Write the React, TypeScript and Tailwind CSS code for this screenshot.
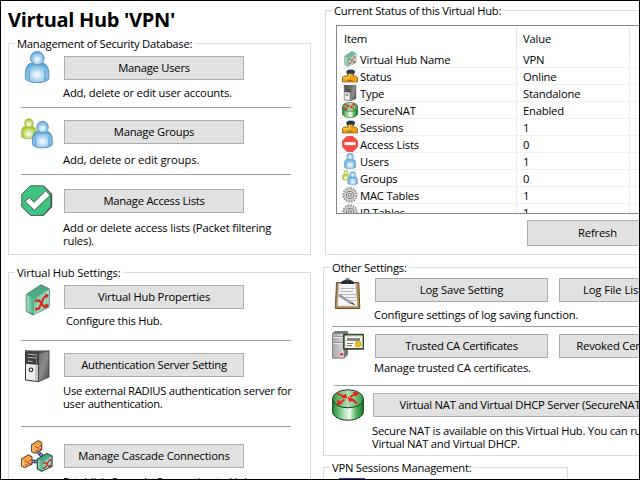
import type { ReactNode } from "react";

type IconProps = { size?: number };

function Person({ body, edge, id }: { body: string; edge: string; id: string }) {
  return (
    <>
      <defs>
        <radialGradient id={id + "h"} cx="0.5" cy="0.6" r="0.6">
          <stop offset="0" stopColor="#fff" />
          <stop offset="1" stopColor={body} />
        </radialGradient>
        <radialGradient id={id + "b"} cx="0.5" cy="0.6" r="0.6">
          <stop offset="0" stopColor="#fff" />
          <stop offset="1" stopColor={body} />
        </radialGradient>
      </defs>
      <path
        d="M9 12.5C6 14 4.4 17.5 4.4 22v5.4c0 1 .8 1.8 2 2.2 2 1.2 5 2 9.6 2s7.600-.6 9.600-2c1.400-.4 2.200-1.200 2.200-2.200V22c0-4.500-1.800-8-4.800-9.500z"
        fill={`url(#${id}b)`}
        stroke={edge}
        strokeWidth="0.9"
      />
      <circle cx="16.300" cy="7.200" r="6.800" fill={`url(#${id}h)`} stroke={edge} strokeWidth="0.9" />
      <path d="M8.600 19.500c-1 3 0 6-.4 10M23.600 19.500c1 3 0 6 .4 10" stroke={edge} strokeWidth="0.9" fill="none" />
    </>
  );
}

function UserIcon({ size = 32 }: IconProps) {
  return (
    <svg width={size} height={size} viewBox="0 0 32 32">
      <Person id={"u" + size} body="#5aa8de" edge="#4f8cbf" />
    </svg>
  );
}

function GroupIcon({ size = 32 }: IconProps) {
  return (
    <svg width={size} height={size} viewBox="0 0 32 32">
      <g transform="translate(-2.500 .6) scale(.64)">
        <Person id={"g" + size} body="#a3c614" edge="#8fa53a" />
      </g>
      <g transform="translate(7.700 3) scale(.85)">
        <Person id={"h" + size} body="#5aa8de" edge="#4584b8" />
      </g>
    </svg>
  );
}

function CheckIcon() {
  return (
    <svg width="32" height="32" viewBox="0 0 32 32">
      <path d="M9.500 .8h13.500l8.200 8.200v13l-8.700 8.900H10L.8 22V9z" fill="#3a4a45" />
      <path d="M9.500 .8h12.500l7.800 8.200v12.500l-8 8.900H10L.8 22V9z" fill="#3fc380" stroke="#55685f" strokeWidth="1" />
      <path d="M3.800 16.200l4.800-3.600 4.600 4.600L24.800 5.600l4.200 4.900-15.600 15z" fill="#fff" stroke="#3e5f4f" strokeWidth="1" />
      <path d="M7.500 19.500l6 4.200L27.500 10.500l-14 14z" fill="#cfd4d2" />
    </svg>
  );
}

function HubShape({ id, orange = false }: { id: string; orange?: boolean }) {
  const light = orange ? "#fbd08a" : "#a5dcc2";
  const mid = orange ? "#f3a337" : "#4cab84";
  const dark = orange ? "#b9741d" : "#2f7f60";
  return (
    <>
      <defs>
        <linearGradient id={id} x1="0" y1="0" x2="1" y2="1">
          <stop offset="0" stopColor={mid} />
          <stop offset="0.55" stopColor={light} />
          <stop offset="1" stopColor={mid} />
        </linearGradient>
        <linearGradient id={id + "s"} x1="0" y1="0" x2="1" y2="0">
          <stop offset="0" stopColor={light} />
          <stop offset="1" stopColor={mid} />
        </linearGradient>
      </defs>
      <path d="M5.200 10.500L20 .800l8.300 4.200-.3 18-16 8L5.200 27z" fill={dark} stroke="#52786a" strokeWidth="1" />
      <path d="M5.500 10.500L20 1.200l8 4-15 9.300z" fill={mid} />
      <path d="M5.500 10.500l7.500 4v16L5.500 27z" fill={`url(#${id}s)`} />
      <path d="M13 14.500l15-9.300v17.600l-15 7.700z" fill={`url(#${id})`} />
      <path d="M15 25.500l3-1 5-11 3.500-1.500M15.200 16.800l3-.3 5 6.500 3.500-1" fill="none" stroke="#d9201c" strokeWidth="1.900" />
      <path d="M23.500 10.300l4.300.3-2.700 3.900zM23.800 19.800l4 1-3.200 3.500zM14.300 23.300l3 1.200-2.800 3zM14.300 14.900l2.800 1.200-2.800 2.600z" fill="#d9201c" />
    </>
  );
}

function HubIcon({ size = 32 }: IconProps) {
  return (
    <svg width={size} height={size} viewBox="0 0 32 32" className={size === 16 ? "opacity-80" : ""}>
      <HubShape id={"hub" + size} />
    </svg>
  );
}

function ServerIcon({ size = 32 }: IconProps) {
  const id = "srv" + size;
  return (
    <svg width={size} height={size} viewBox="0 0 32 32">
      <defs>
        <linearGradient id={id} x1="0" y1="0" x2="1" y2="1">
          <stop offset="0" stopColor="#6a6a6a" />
          <stop offset="0.5" stopColor="#8c8c8c" />
          <stop offset="1" stopColor="#4a4a4a" />
        </linearGradient>
      </defs>
      <path d="M4.500 .500H27L17.500 3.500h-13z" fill="#555" />
      <path d="M17 3.500L28 .500V27l-11 4.800z" fill={`url(#${id})`} stroke="#333" strokeWidth="0.800" />
      <path d="M4.500 .800l12.800 2V31.600L4.500 30z" fill="#ededed" stroke="#333" strokeWidth="1" />
      <path d="M5 1.200l12 1.900V15L5 13.800z" fill="#3c3c3c" />
      <path d="M6.500 4l9 1M6.500 7.300l9 .8M6.500 11l5 .4" stroke="#bdbdbd" strokeWidth="1" />
      <path d="M15.400 3v12M15 16l0 15" stroke="#8d8d8d" strokeWidth="0.800" />
      <circle cx="10" cy="19.800" r="1.800" fill="#fff" stroke="#222" strokeWidth="1.100" />
    </svg>
  );
}

function CascadeIcon() {
  return (
    <svg width="32" height="32" viewBox="0 0 32 32">
      <path d="M15 10l8 8M8 21.500h10" stroke="#3c3c70" strokeWidth="3.600" />
      <path d="M15 10l8 8M8 21.500h10" stroke="#b9b9dc" strokeWidth="1.200" strokeDasharray="2 1" />
      <g transform="translate(8.300 .3) scale(.44 .42)">
        <HubShape id="ca" orange />
        <path d="M5.200 10.500L20 .800l8.300 4.200-.3 18-16 8L5.200 27z" fill="none" stroke="#4c330d" strokeWidth="2" />
      </g>
      <g transform="translate(-2 14.600) scale(.46 .42)">
        <HubShape id="cb" orange />
        <path d="M5.200 10.500L20 .800l8.300 4.200-.3 18-16 8L5.200 27z" fill="none" stroke="#4c330d" strokeWidth="2" />
      </g>
      <g transform="translate(13 13) scale(.64 .59)">
        <HubShape id="cc" />
        <path d="M5.200 10.500L20 .800l8.300 4.200-.3 18-16 8L5.200 27z" fill="none" stroke="#1d4b3a" strokeWidth="1.600" />
      </g>
    </svg>
  );
}

function ClipboardIcon() {
  return (
    <svg width="32" height="32" viewBox="0 0 32 32">
      <path d="M4.500 5.500h22.300l1 26H3.300z" fill="#b58b50" stroke="#6e4e24" strokeWidth="1" />
      <path d="M6.500 6.500h17.500l1.500 22.800H5.500z" fill="#f4f4f4" stroke="#9d9d9d" strokeWidth="0.600" />
      <path d="M9 7c0-3 2-3.500 4.300-4C13.500.500 17.500.500 17.700 3c3 .5 4.300 1.500 4.300 4z" fill="#262a33" />
      <circle cx="15.500" cy="2.500" r="0.900" fill="#b7bac0" />
      <path d="M8.500 11.500h15M8 14.500h13M8 17.500h16M13 20.500h11M17 23.500h7" stroke="#b5b5b5" strokeWidth="1" />
      <path d="M7 18l13 8.700" stroke="#777d83" strokeWidth="2.200" />
      <path d="M6.500 17.300l13 8.600" stroke="#d5d8da" strokeWidth="0.600" />
      <path d="M19.500 25.800l3 2" stroke="#333" strokeWidth="1.200" />
    </svg>
  );
}

function CertificateIcon() {
  return (
    <svg width="32" height="32" viewBox="0 0 32 32">
      <defs>
        <linearGradient id="cert" x1="0" y1="0" x2="1" y2="0">
          <stop offset="0" stopColor="#a9a9a9" />
          <stop offset="1" stopColor="#dadada" />
        </linearGradient>
      </defs>
      <path d="M.500 2.500L3 .500h12.500L15.500 23.500l-3 3.500H.500z" fill="#777" stroke="#666" strokeWidth="0.800" />
      <path d="M.500 2.500h11.700V27H.500z" fill="url(#cert)" stroke="#808080" strokeWidth="0.700" />
      <path d="M1 5.500h11M1 11.500h11" stroke="#9a9a9a" />
      <path d="M1 6.500h11M1 12.500h11" stroke="#e6e6e6" />
      <circle cx="9.500" cy="23.300" r="1.300" fill="#f41818" />
      <path d="M11.800 3.600h19.700v14.200H11.800z" fill="#fdfdf5" stroke="#354b28" strokeWidth="1.800" />
      <path d="M13.800 5.600h15.700v10.200H13.800z" fill="none" stroke="#c8d4b8" strokeWidth="0.700" />
      <path d="M15 7h13v3H15z" fill="#858585" />
      <path d="M15 12.500h6M15 14.500h5" stroke="#777" />
      <circle cx="26" cy="13" r="3" fill="#e6c21f" stroke="#bb930e" strokeWidth="0.600" />
    </svg>
  );
}

function RouterIcon({ size = 32 }: IconProps) {
  const id = "rt" + size;
  return (
    <svg width={size} height={size} viewBox="0 0 32 32">
      <defs>
        <linearGradient id={id}>
          <stop offset="0" stopColor="#168c28" />
          <stop offset="0.350" stopColor="#a9dfae" />
          <stop offset="0.550" stopColor="#f2fff2" />
          <stop offset="0.750" stopColor="#5cba65" />
          <stop offset="1" stopColor="#0f7a20" />
        </linearGradient>
        <linearGradient id={id + "t"}>
          <stop offset="0" stopColor="#2fa03c" />
          <stop offset="0.500" stopColor="#b5dfb8" />
          <stop offset="1" stopColor="#2fa03c" />
        </linearGradient>
      </defs>
      <path d="M.600 10v12.500C.600 27.500 7.500 31.200 16 31.200s15.400-3.700 15.400-8.700V10z" fill={`url(#${id})`} stroke="#26352a" strokeWidth="1" />
      <ellipse cx="16" cy="9.800" rx="15.400" ry="9" fill={`url(#${id}t)`} stroke="#26352a" strokeWidth="1" />
      <path d="M5 4.300l7.500 3.500M12.500 10.500l-6 4.500M19 9.500l6 5M18 8l6-3.500" stroke="#ee1c1c" strokeWidth="1.800" />
      <path d="M15.500 9.300l-6-.3 4-4.500zM4.500 16l1.500-5.500 4.500 4.200zM15.800 7.500l1.200 5.500 5-1.800zM27 3.300l-6.500-.3 4 4.500z" fill="#ee1c1c" />
    </svg>
  );
}

function PlugIcon() {
  return (
    <svg width="16" height="16" viewBox="0 0 16 16">
      <path d="M4.500 3.500L6.500 2h4.500l2 1.500-1.500 3H5.500z" fill="#243a5c" stroke="#15233c" strokeWidth="0.600" />
      <path d="M6 5.500h5v2.500h2.500l2 1.500v4.500H.5V9.500L2 8h4z" fill="#eda312" stroke="#7c4e05" strokeWidth="0.700" />
      <path d="M7.500 6v3L5.500 10h-4" stroke="#ffdb70" strokeWidth="1" fill="none" />
      <path d="M5.500 12.500h5" stroke="#9a6408" strokeWidth="1" />
    </svg>
  );
}

function StopIcon() {
  return (
    <svg width="16" height="16" viewBox="0 0 16 16">
      <path d="M5 .400h6L15.600 5v5.700L11 15.400H5L.400 10.700V5z" fill="#fa4a42" stroke="#d93831" strokeWidth="0.800" />
      <path d="M2.500 6.200h11v2.900h-11z" fill="#fff" />
    </svg>
  );
}

function GearIcon() {
  return (
    <svg width="16" height="16" viewBox="0 0 16 16">
      <circle cx="8" cy="8" r="6.900" fill="none" stroke="#8b8b8b" strokeWidth="1.600" strokeDasharray="1.600 1.110" />
      <circle cx="8" cy="8" r="6" fill="#d2d2d2" stroke="#a0a0a0" strokeWidth="0.600" />
      <circle cx="8" cy="8" r="3.700" fill="#e3e3e3" stroke="#777" strokeWidth="1" />
      <circle cx="8" cy="8" r="1.700" fill="#c3c3c3" stroke="#777" strokeWidth="0.800" />
    </svg>
  );
}

function Button({ className, children }: { className: string; children: ReactNode }) {
  return (
    <button className={`flex shrink-0 items-center justify-center border border-[#adadad] bg-[#e1e1e1] pb-px ${className}`}>
      {children}
    </button>
  );
}

function Legend({ children, className = "" }: { children: ReactNode; className?: string }) {
  return <div className={`-mt-[7px] ml-[6px] h-[14px] w-fit bg-white px-[2px] leading-[14px] ${className}`}>{children}</div>;
}

function Row({ className, icon, iconClass, children }: { className: string; icon: ReactNode; iconClass: string; children: ReactNode }) {
  return (
    <div className={`flex shrink-0 ${className}`}>
      <div className={`h-8 w-8 shrink-0 ${iconClass}`}>{icon}</div>
      <div className="shrink-0">{children}</div>
    </div>
  );
}

const items: { icon: ReactNode; name: string; value: string }[] = [
  { icon: <HubIcon size={16} />, name: "Virtual Hub Name", value: "VPN" },
  { icon: <PlugIcon />, name: "Status", value: "Online" },
  { icon: <ServerIcon size={16} />, name: "Type", value: "Standalone" },
  { icon: <RouterIcon size={16} />, name: "SecureNAT", value: "Enabled" },
  { icon: <PlugIcon />, name: "Sessions", value: "1" },
  { icon: <StopIcon />, name: "Access Lists", value: "0" },
  { icon: <UserIcon size={16} />, name: "Users", value: "1" },
  { icon: <GroupIcon size={16} />, name: "Groups", value: "0" },
  { icon: <GearIcon />, name: "MAC Tables", value: "1" },
  { icon: <GearIcon />, name: "IP Tables", value: "1" },
];

function StatusList() {
  return (
    <div className="ml-[10px] mt-[7px] h-[189px] w-[330px] overflow-hidden border border-[#828790] pl-px">
      <div className="flex h-[25px] pt-px">
        <div className="w-[179px] border-r border-[#e5e5e5] pl-[6px] pt-1 leading-4">Item</div>
        <div className="w-[113px] border-r border-[#e5e5e5] pl-[6px] pt-1 leading-4">Value</div>
      </div>
      {items.map((item) => (
        <div key={item.name} className="flex h-[17px] border-b border-[#f0f0f0] leading-4">
          <div className="flex w-[179px] border-r border-[#e9edf7] pl-1">
            <span className="mr-[2px] h-4 w-4 shrink-0">{item.icon}</span>
            <span className="pt-px">{item.name}</span>
          </div>
          <div className="w-[113px] border-r border-[#e9edf7] pl-[6px] pt-px">{item.value}</div>
        </div>
      ))}
    </div>
  );
}

export default function App() {
  return (
    <div className="h-[480px] w-[640px] overflow-hidden border border-black bg-white">
      <div className="flex h-[478px] w-[638px] overflow-hidden whitespace-nowrap pl-[7px] font-['Open_Sans','Noto_Sans',sans-serif] text-[11.25px] leading-[13px] tracking-[-0.2px] text-black">
        <div className="flex w-[303px] shrink-0 flex-col">
          <h1 className="h-[42px] shrink-0 pt-[5px] text-[20px] font-bold leading-[28px] tracking-[-0.3px]">Virtual Hub 'VPN'</h1>

          <section className="flex h-[212px] shrink-0 flex-col border border-[#dcdcdc]">
            <Legend className="tracking-[-0.25px]">Management of Security Database:</Legend>
            <Row className="h-[56px] pl-3" icon={<UserIcon />} iconClass="">
              <Button className="ml-[11px] mt-[5px] h-6 w-[180px] tracking-[-0.25px]">Manage Users</Button>
              <p className="ml-[10px] mt-[6px]">Add, delete or edit user accounts.</p>
            </Row>
            <hr className="ml-3 w-[270px] border-[#a0a0a0]" />
            <Row className="h-[66px] pl-3" icon={<GroupIcon />} iconClass="mt-[10px]">
              <Button className="ml-[11px] mt-3 h-6 w-[180px] tracking-[-0.25px]">Manage Groups</Button>
              <p className="ml-[10px] mt-[9px] tracking-[-0.1px]">Add, delete or edit groups.</p>
            </Row>
            <hr className="ml-3 w-[270px] border-[#a0a0a0]" />
            <Row className="h-[74px] pl-3" icon={<CheckIcon />} iconClass="mt-[10px]">
              <Button className="ml-[11px] mt-[14px] h-6 w-[180px] tracking-[-0.26px]">Manage Access Lists</Button>
              <p className="ml-[10px] mt-[8px] tracking-[-0.16px]">
                Add or delete access lists (Packet filtering
                <br />
                rules).
              </p>
            </Row>
          </section>

          <section className="mt-[17px] flex h-[260px] shrink-0 flex-col border border-[#dcdcdc]">
            <Legend className="tracking-[-0.15px]">Virtual Hub Settings:</Legend>
            <Row className="h-[60px] pl-3" icon={<HubIcon />} iconClass="mt-1">
              <Button className="ml-[11px] mt-[5px] h-6 w-[180px]">Virtual Hub Properties</Button>
              <p className="ml-[13px] mt-[5px] tracking-[-0.27px]">Configure this Hub.</p>
            </Row>
            <hr className="ml-3 w-[270px] border-[#a0a0a0]" />
            <Row className="h-[85px] pl-3" icon={<ServerIcon />} iconClass="mt-[9px]">
              <Button className="ml-[11px] mt-3 h-6 w-[180px] tracking-[-0.25px]">Authentication Server Setting</Button>
              <p className="ml-[10px] mt-[7px] tracking-[-0.29px]">
                Use external RADIUS authentication server for
                <br />
                user authentication.
              </p>
            </Row>
            <hr className="ml-3 w-[270px] border-[#a0a0a0]" />
            <Row className="h-[74px] pl-3" icon={<CascadeIcon />} iconClass="mt-[13px]">
              <Button className="ml-[11px] mt-[17px] h-6 w-[180px]">Manage Cascade Connections</Button>
              <p className="ml-[10px] mt-[7px]">Establish Cascade Connection to Hubs</p>
            </Row>
          </section>
        </div>

        <div className="flex w-[350px] shrink-0 flex-col pl-3">
          <section className="ml-[2px] mt-[9px] flex h-[245px] w-[400px] shrink-0 flex-col border border-[#dcdcdc]">
            <Legend className="tracking-[-0.27px]">Current Status of this Virtual Hub:</Legend>
            <StatusList />
            <Button className="ml-[201px] mt-[6px] h-[26px] w-[141px]">Refresh</Button>
          </section>

          <section className="mt-3 flex h-[189px] w-[400px] shrink-0 flex-col border border-[#dcdcdc]">
            <Legend className="tracking-[-0.23px]">Other Settings:</Legend>
            <Row className="h-[51px] pl-2" icon={<ClipboardIcon />} iconClass="mt-[2px]">
              <div className="ml-[11px] mt-[3px] flex gap-[11px]">
                <Button className="h-6 w-[173px] tracking-[-0.1px]">Log Save Setting</Button>
                <Button className="h-6 w-[107px] tracking-[-0.1px]">Log File List</Button>
              </div>
              <p className="ml-[10px] mt-[6px]">Configure settings of log saving function.</p>
            </Row>
            <hr className="ml-2 w-[360px] border-[#a0a0a0]" />
            <Row className="h-[58px] pl-2" icon={<CertificateIcon />} iconClass="mt-1">
              <div className="ml-[11px] mt-[7px] flex gap-[11px]">
                <Button className="h-6 w-[173px] tracking-[-0.29px]">Trusted CA Certificates</Button>
                <Button className="h-6 w-[107px]">Revoked Certs</Button>
              </div>
              <p className="ml-[10px] mt-[3px]">Manage trusted CA certificates.</p>
            </Row>
            <hr className="ml-[10px] w-[360px] border-[#a0a0a0]" />
            <Row className="h-[69px] pl-2" icon={<RouterIcon />} iconClass="mt-[3px]">
              <Button className="ml-[9px] mt-[7px] h-6 w-[297px] tracking-[-0.25px]">Virtual NAT and Virtual DHCP Server (SecureNAT)</Button>
              <p className="ml-2 mt-[7px] tracking-[-0.25px]">
                Secure NAT is available on this Virtual Hub. You can run
                <br />
                Virtual NAT and Virtual DHCP.
              </p>
            </Row>
          </section>

          <section className="mt-[11px] flex h-[60px] w-[245px] shrink-0 flex-col border border-[#dcdcdc]">
            <Legend className="tracking-[-0.25px]">VPN Sessions Management:</Legend>
            <div className="ml-[15px] mt-[3px] h-6 w-[26px] bg-[#3838a8]" />
          </section>
        </div>
      </div>
    </div>
  );
}
